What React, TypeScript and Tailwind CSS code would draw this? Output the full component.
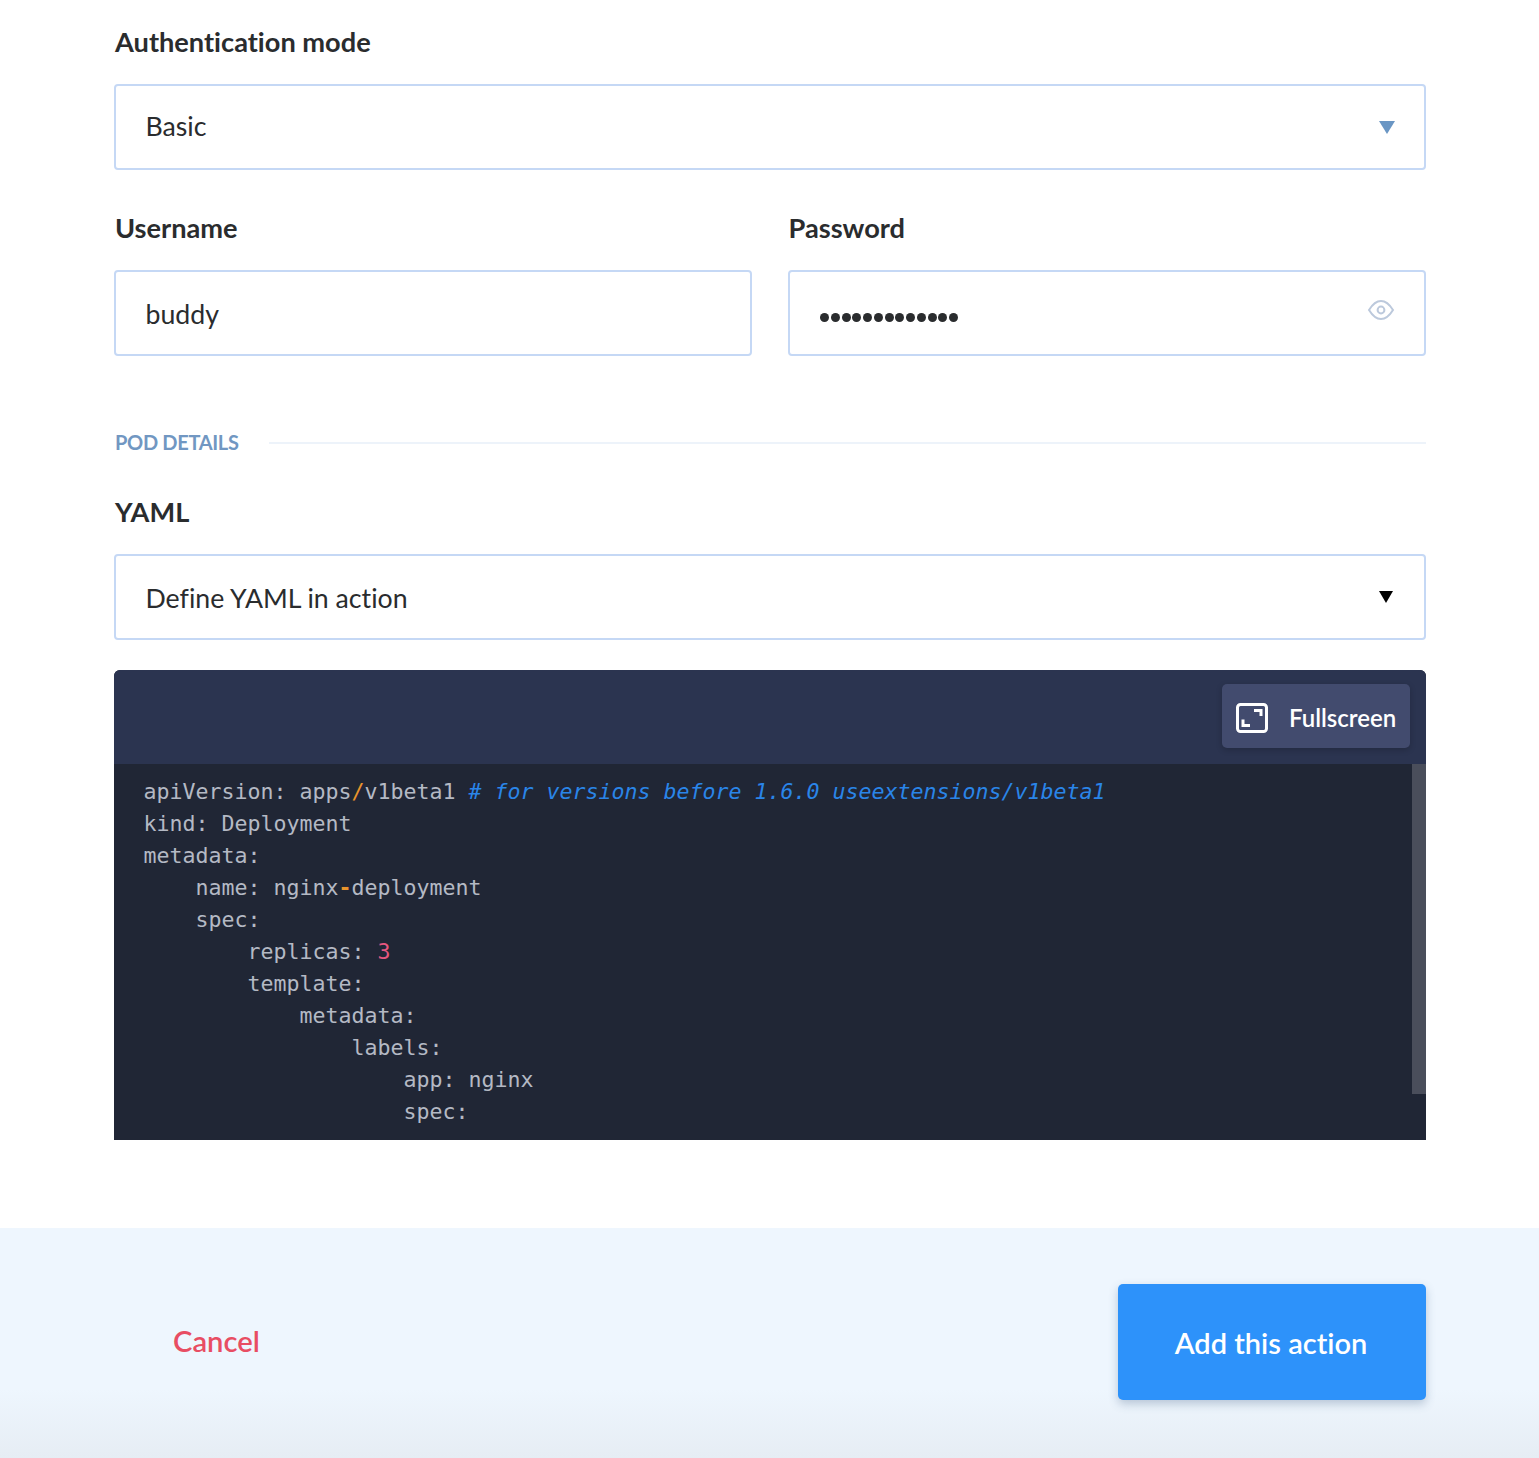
const lato = "font-['Lato',sans-serif] [font-variant-ligatures:none]";

function Label({ children }: { children: string }) {
  return <div className="h-[40px] pl-[1px] text-[27.2px] leading-[40px] font-bold text-[#2a2c2e]">{children}</div>;
}

function Select({ value, arrow, textClass }: { value: string; arrow: React.ReactNode; textClass: string }) {
  return (
    <div className="mt-[22px] flex h-[86px] items-center justify-between rounded-[4px] border-2 border-[#c5d8f5] bg-white pl-[29.5px]">
      <span className={`text-[26.7px] text-[#2a2c2e] ${textClass}`}>{value}</span>
      {arrow}
    </div>
  );
}

function Code({ children, indent = 0 }: { children: React.ReactNode; indent?: number }) {
  return (
    <div className="h-[32px] whitespace-pre" style={{ paddingLeft: indent * 52 }}>
      {children}
    </div>
  );
}

export default function App() {
  return (
    <div className={`${lato} flex h-[1458px] w-full flex-col bg-white`}>
      <div className="flex-1 pt-[22px] pr-[113px] pl-[114px]">
        <Label>Authentication mode</Label>
        <Select
          value="Basic"
          textClass="-mt-[1px]"
          arrow={
            <svg width="16" height="13" viewBox="0 0 16 13" className="mr-[29px] text-[#6a96c4]">
              <polygon points="0,0 16,0 8,13" fill="currentColor" />
            </svg>
          }
        />

        <div className="mt-[38px] grid grid-cols-2 gap-[36px]">
          <div>
            <Label>Username</Label>
            <div className="mt-[22px] flex h-[86px] items-center rounded-[4px] border-2 border-[#c5d8f5] bg-white px-[29.5px] text-[26.7px] text-[#2a2c2e]">
              <span className="mt-[3px]">buddy</span>
            </div>
          </div>
          <div className="-ml-[0.5px]">
            <Label>Password</Label>
            <div className="mt-[22px] ml-[0.5px] flex h-[86px] items-center justify-between rounded-[4px] border-2 border-[#c5d8f5] bg-white pr-[29px] pl-[30px]">
              <span className="mt-[8px] flex gap-[1.75px]">
                {Array.from({ length: 13 }).map((_, i) => (
                  <span key={i} className="h-[9px] w-[9px] rounded-full bg-[#2a2c2e]" />
                ))}
              </span>
              <svg width="28" height="22" viewBox="0 0 28 22" fill="none" stroke="#bcc9dc" strokeWidth="2" className="mb-[7px]">
                <path d="M2 11 C6 4.5 9.5 2 14 2 C18.5 2 22 4.5 26 11 C22 17.5 18.5 20 14 20 C9.5 20 6 17.5 2 11 Z" />
                <circle cx="14" cy="11" r="3.4" />
              </svg>
            </div>
          </div>
        </div>

        <div className="mt-[74px] flex h-[26px] items-center gap-[30px]">
          <span className="-mt-[2px] pl-[1px] text-[20px] font-bold tracking-[-0.32px] text-[#7197c2]">POD DETAILS</span>
          <div className="h-[2px] flex-1 bg-[#edf3fa]" />
        </div>

        <div className="mt-[36px]">
          <Label>YAML</Label>
        </div>
        <Select
          value="Define YAML in action"
          textClass="mt-[3px]"
          arrow={
            <svg width="14" height="12" viewBox="0 0 14 12" className="mr-[31px] text-black">
              <polygon points="0,0 14,0 7,12" fill="currentColor" />
            </svg>
          }
        />

        <div className="mt-[30px] h-[470px] overflow-hidden rounded-t-[6px] bg-[#202635]">
          <div className="flex h-[94px] items-start justify-end bg-[#2b3450] pt-[14px] pr-[16px]">
            <div className="flex h-[64px] w-[188px] items-center gap-[21px] rounded-[5px] bg-[#424b6e] pl-[14px] shadow-[0_2px_6px_rgba(0,0,0,0.2)]">
              <svg width="32" height="30" viewBox="0 0 32 30" fill="none" stroke="white" className="mt-[3px]">
                <rect x="1.5" y="1.5" width="29" height="27" rx="3" strokeWidth="3" />
                <path d="M7 16.5V22.5H14M18 7.5H25V13" strokeWidth="3" />
              </svg>
              <span className="mt-[3px] text-[24px] font-semibold text-white">Fullscreen</span>
            </div>
          </div>
          <div className="relative h-[376px] pt-[12px] pl-[29.5px] font-['DejaVu_Sans_Mono',monospace] text-[21.6px] leading-[32px] text-[#b4b9c4]">
            <Code>
              apiVersion: apps<span className="text-[#e8942c]">/</span>v1beta1{" "}
              <span className="text-[#2a85e8] italic">
                # for versions before 1.6.0 useextensions/v1beta1
              </span>
            </Code>
            <Code>kind: Deployment</Code>
            <Code>metadata:</Code>
            <Code indent={1}>
              name: nginx<span className="font-bold text-[#e8942c]">-</span>deployment
            </Code>
            <Code indent={1}>spec:</Code>
            <Code indent={2}>
              replicas: <span className="text-[#e5577f]">3</span>
            </Code>
            <Code indent={2}>template:</Code>
            <Code indent={3}>metadata:</Code>
            <Code indent={4}>labels:</Code>
            <Code indent={5}>app: nginx</Code>
            <Code indent={5}>spec:</Code>
            <div className="absolute top-0 right-0 h-[330px] w-[14px] bg-[#4a4e5b]" />
          </div>
        </div>
      </div>

      <div className="flex h-[230px] items-start justify-between bg-[linear-gradient(to_bottom,#eef6fe_0%,#eef6fe_70%,#e6edf4_100%)] pt-[56px] pr-[113px] pl-[173px]">
        <span className="mt-[38px] text-[29.2px] leading-[38px] font-semibold text-[#e84d63]">Cancel</span>
        <div className="flex h-[116px] w-[308px] items-center justify-center rounded-[5px] bg-[#2d92fa] pt-[2px] pr-[2px] text-[29px] font-semibold text-white shadow-[0_4px_10px_rgba(60,90,130,0.3)]">
          Add this action
        </div>
      </div>
    </div>
  );
}
